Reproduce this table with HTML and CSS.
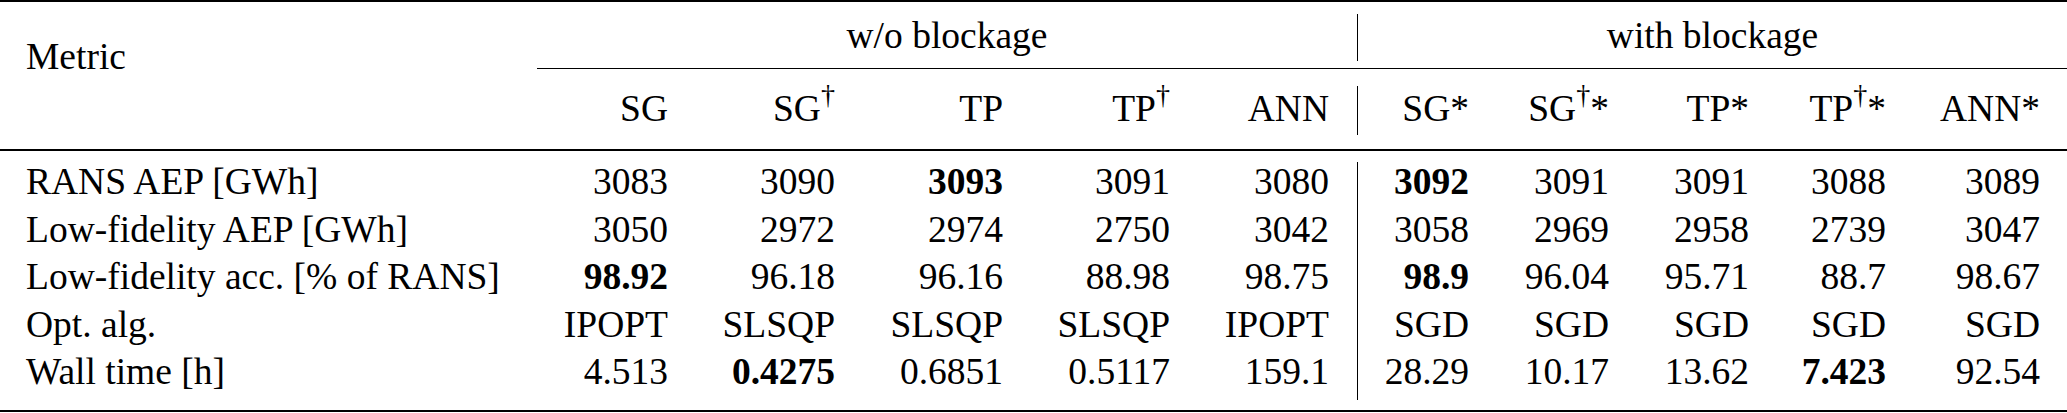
FILE: index.html
```html
<!DOCTYPE html>
<html lang="en">
<head>
<meta charset="utf-8">
<title>AEP comparison</title>
<link rel="stylesheet" href="styles.css">
</head>
<body>
<table class="results">
  <colgroup>
    <col class="w-metric">
    <col class="w-c1"><col class="w-c2"><col class="w-c3"><col class="w-c4"><col class="w-c5">
    <col class="w-c6"><col class="w-c7"><col class="w-c8"><col class="w-c9"><col class="w-c10">
  </colgroup>
  <thead>
    <tr class="rule-row"><td colspan="11" class="rule-cell"><div class="rule rule-top"></div></td></tr>
    <tr class="head1">
      <th rowspan="3" class="metric">Metric</th>
      <th colspan="5" class="group">w/o blockage</th>
      <th colspan="5" class="group bar">with blockage</th>
    </tr>
    <tr class="rule-row"><td colspan="10" class="rule-cell"><div class="rule rule-cmid"></div></td></tr>
    <tr class="head2">
      <th>SG</th>
      <th>SG<sup class="dag">†</sup></th>
      <th>TP</th>
      <th>TP<sup class="dag">†</sup></th>
      <th class="c5">ANN</th>
      <th class="bar">SG*</th>
      <th>SG<sup class="dag">†</sup>*</th>
      <th>TP*</th>
      <th>TP<sup class="dag">†</sup>*</th>
      <th class="c10">ANN*</th>
    </tr>
    <tr class="rule-row"><td colspan="11" class="rule-cell"><div class="rule rule-mid"></div></td></tr>
  </thead>
  <tbody>
    <tr>
      <td class="label">RANS AEP [GWh]</td>
      <td>3083</td><td>3090</td><td class="best">3093</td><td>3091</td><td class="c5">3080</td>
      <td class="bar best">3092</td><td>3091</td><td>3091</td><td>3088</td><td class="c10">3089</td>
    </tr>
    <tr>
      <td class="label">Low-fidelity AEP [GWh]</td>
      <td>3050</td><td>2972</td><td>2974</td><td>2750</td><td class="c5">3042</td>
      <td class="bar">3058</td><td>2969</td><td>2958</td><td>2739</td><td class="c10">3047</td>
    </tr>
    <tr>
      <td class="label">Low-fidelity acc. [% of RANS]</td>
      <td class="best">98.92</td><td>96.18</td><td>96.16</td><td>88.98</td><td class="c5">98.75</td>
      <td class="bar best">98.9</td><td>96.04</td><td>95.71</td><td>88.7</td><td class="c10">98.67</td>
    </tr>
    <tr>
      <td class="label">Opt. alg.</td>
      <td>IPOPT</td><td>SLSQP</td><td>SLSQP</td><td>SLSQP</td><td class="c5">IPOPT</td>
      <td class="bar">SGD</td><td>SGD</td><td>SGD</td><td>SGD</td><td class="c10">SGD</td>
    </tr>
    <tr>
      <td class="label">Wall time [h]</td>
      <td>4.513</td><td class="best">0.4275</td><td>0.6851</td><td>0.5117</td><td class="c5">159.1</td>
      <td class="bar">28.29</td><td>10.17</td><td>13.62</td><td class="best">7.423</td><td class="c10">92.54</td>
    </tr>
  </tbody>
  <tfoot>
    <tr class="rule-row"><td colspan="11" class="rule-cell"><div class="rule rule-bottom"></div></td></tr>
  </tfoot>
</table>
</body>
</html>
```

FILE: styles.css
```css
html, body {
  margin: 0;
  padding: 0;
  background: #ffffff;
}

.results {
  width: 2067px;
  table-layout: fixed;
  border-collapse: separate;
  border-spacing: 0;
  font-size: 37.5px;
  color: #000000;
  white-space: nowrap;
}

.results th,
.results td {
  font-family: "Liberation Serif", "Times New Roman", serif;
  padding: 0;
  font-weight: normal;
  text-align: right;
  vertical-align: top;
}

.w-metric { width: 537px; }
.w-c1 { width: 131px; }
.w-c2 { width: 167px; }
.w-c3 { width: 168px; }
.w-c4 { width: 167px; }
.w-c5 { width: 187px; }
.w-c6 { width: 112px; }
.w-c7 { width: 140px; }
.w-c8 { width: 140px; }
.w-c9 { width: 137px; }
.w-c10 { width: 181px; }

/* rules (booktabs style) */
.results .rule-cell {
  line-height: 0;
  font-size: 0;
}
.rule {
  background: #000000;
}
.rule-top {
  height: 2px;
  margin-bottom: 12px;
}
.rule-cmid {
  height: 1px;
  margin-top: 7px;
  margin-bottom: 17px;
}
.rule-mid {
  height: 1.5px;
  margin-top: 14px;
  margin-bottom: 11.5px;
}
.rule-bottom {
  height: 2px;
  margin-top: 10.5px;
}

/* header rows */
.results .head1 th {
  line-height: 44px;
  padding-bottom: 3px;
}
.results .head1 .group {
  text-align: center;
}
.results .head1 .metric {
  text-align: left;
  padding-left: 26px;
  padding-top: 22.6px;
  padding-bottom: 0;
  line-height: 40px;
}
.results .head2 th {
  line-height: 46px;
  padding-bottom: 3px;
}

.dag {
  font-size: 75%;
  line-height: 0;
  vertical-align: 0.6em;
}

/* body */
.results tbody td {
  line-height: 40px;
  padding-bottom: 7.5px;
}
.results tbody td.label {
  text-align: left;
  padding-left: 26px;
}
.results .best {
  font-weight: bold;
}

.results .c5 {
  padding-right: 28px;
}
.results .c10 {
  padding-right: 27px;
}
.results .bar {
  border-left: 1px solid #000000;
}
```
